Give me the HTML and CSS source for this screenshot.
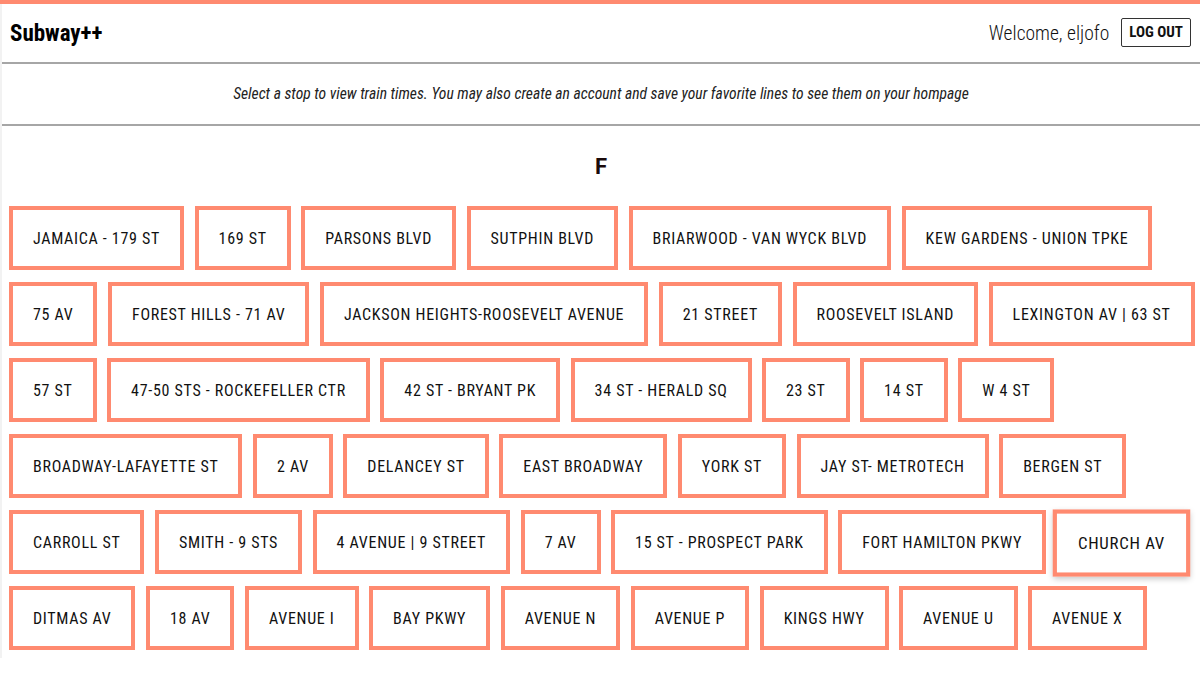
FILE: index.html
```html
<!DOCTYPE html>
<html>
<head>
<meta charset="utf-8">
<link rel="stylesheet" href="styles.css">
</head>
<body>
<div class="page">
  <header class="topbar">
    <div class="logo">Subway++</div>
    <div class="user">
      <span class="welcome">Welcome, eljofo</span>
      <button class="logout">LOG OUT</button>
    </div>
  </header>
  <div class="intro">Select a stop to view train times. You may also create an account and save your favorite lines to see them on your hompage</div>
  <main class="line">
    <h2 class="line-title">F</h2>
    <div class="stops">
      <button class="stop">Jamaica - 179 St</button>
      <button class="stop">169 St</button>
      <button class="stop">Parsons Blvd</button>
      <button class="stop">Sutphin Blvd</button>
      <button class="stop">Briarwood - Van Wyck Blvd</button>
      <button class="stop">Kew Gardens - Union Tpke</button>
      <button class="stop">75 Av</button>
      <button class="stop">Forest Hills - 71 Av</button>
      <button class="stop">Jackson Heights-Roosevelt Avenue</button>
      <button class="stop">21 Street</button>
      <button class="stop">Roosevelt Island</button>
      <button class="stop">Lexington Av | 63 St</button>
      <button class="stop">57 St</button>
      <button class="stop">47-50 Sts - Rockefeller Ctr</button>
      <button class="stop">42 St - Bryant Pk</button>
      <button class="stop">34 St - Herald Sq</button>
      <button class="stop">23 St</button>
      <button class="stop">14 St</button>
      <button class="stop">W 4 St</button>
      <button class="stop">Broadway-Lafayette St</button>
      <button class="stop">2 Av</button>
      <button class="stop">Delancey St</button>
      <button class="stop">East Broadway</button>
      <button class="stop">York St</button>
      <button class="stop">Jay St- MetroTech</button>
      <button class="stop">Bergen St</button>
      <button class="stop">Carroll St</button>
      <button class="stop">Smith - 9 Sts</button>
      <button class="stop">4 Avenue | 9 Street</button>
      <button class="stop">7 Av</button>
      <button class="stop">15 St - Prospect Park</button>
      <button class="stop">Fort Hamilton Pkwy</button>
      <button class="stop hover">Church Av</button>
      <button class="stop">Ditmas Av</button>
      <button class="stop">18 Av</button>
      <button class="stop">Avenue I</button>
      <button class="stop">Bay Pkwy</button>
      <button class="stop">Avenue N</button>
      <button class="stop">Avenue P</button>
      <button class="stop">Kings Hwy</button>
      <button class="stop">Avenue U</button>
      <button class="stop">Avenue X</button>
    </div>
  </main>
</div>
</body>
</html>
```
FILE: styles.css
```css
html, body {
  margin: 0;
  padding: 0;
  background: #fff;
}
body {
  font-family: Roboto, "Liberation Sans", sans-serif;
  color: #111;
  border-top: 4px solid #ff8a70;
}
.page {
  border-left: 2px solid #f2f2f2;
  padding-bottom: 8px;
}
.topbar {
  height: 58px;
  display: flex;
  align-items: center;
  justify-content: space-between;
  padding: 0 9px 0 8px;
  border-bottom: 2px solid #a6a6a6;
}
.logo {
  font-family: "Roboto Condensed", Roboto, sans-serif;
  font-stretch: 75%;
  font-weight: 700;
  font-size: 23px;
  color: #000;
}
.user {
  display: flex;
  align-items: center;
}
.welcome {
  font-family: "Roboto Condensed", Roboto, sans-serif;
  font-stretch: 75%;
  font-weight: 300;
  font-size: 19.5px;
  color: #111;
  margin-right: 12px;
}
.logout {
  font-family: "Roboto Condensed", Roboto, sans-serif;
  font-stretch: 75%;
  font-weight: 700;
  font-size: 15px;
  height: 29px;
  padding: 0 7px;
  margin-top: -2px;
  border: 1.5px solid #333;
  border-radius: 2px;
  background: #fff;
  color: #111;
}
.intro {
  height: 60px;
  display: flex;
  align-items: center;
  justify-content: center;
  font-family: "Roboto Condensed", Roboto, sans-serif;
  font-stretch: 75%;
  font-style: italic;
  font-size: 15.6px;
  color: #222;
  border-bottom: 2px solid #a6a6a6;
}
.line {
  padding-top: 28px;
}
.line-title {
  margin: 0 0 26px;
  text-align: center;
  font-size: 22px;
  line-height: 26px;
  font-weight: 700;
  color: #1a0a0a;
}
.stops {
  display: flex;
  flex-wrap: wrap;
  gap: 12px 10.5px;
  padding: 0 0 0 7px;
}
.stop {
  height: 64px;
  padding: 0 20px;
  border: 4px solid #ff8a70;
  background: #fff;
  font-family: "Roboto Condensed", Roboto, sans-serif;
  font-stretch: 75%;
  font-size: 16px;
  letter-spacing: 0.7px;
  text-transform: uppercase;
  color: #111;
}
.stop.hover {
  transform: scale(1.05) translateY(1px);
  box-shadow: 0 2px 6px rgba(0, 0, 0, 0.25);
}
```
